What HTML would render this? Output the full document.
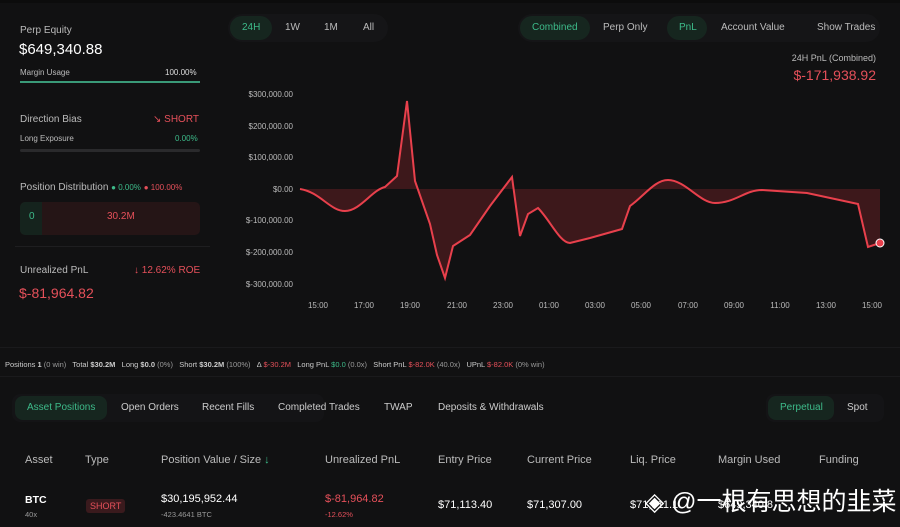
<!DOCTYPE html>
<html><head><meta charset="utf-8"><style>
*{margin:0;padding:0;box-sizing:border-box}
body{width:900px;height:527px;background:#111112;font-family:"Liberation Sans",sans-serif;color:#d8d8d8;position:relative;overflow:hidden}
.a{position:absolute;white-space:nowrap}
.g{color:#3dbb8a}.r{color:#e5505a}.m{color:#9a9a9a}
.pill{position:absolute;border-radius:12px;background:#16261f}
</style></head><body>
<div class="a" style="left:0;top:0;width:900px;height:3px;background:#0c0c0c"></div>
<div class="a" style="left:20px;top:25px;font-size:10px;color:#bbb">Perp Equity</div>
<div class="a" style="left:19px;top:41px;font-size:15px;color:#fff">$649,340.88</div>
<div class="a" style="left:20px;top:68px;font-size:8px;color:#bbb">Margin Usage</div>
<div class="a" style="left:165px;top:68px;font-size:8px;color:#ddd">100.00%</div>
<div class="a" style="left:20px;top:81px;width:180px;height:2px;background:#3a9a78"></div>
<div class="a" style="left:20px;top:114px;font-size:10px;color:#bbb">Direction Bias</div>
<div class="a r" style="left:153px;top:114px;font-size:10px">↘ SHORT</div>
<div class="a" style="left:20px;top:134px;font-size:8px;color:#bbb">Long Exposure</div>
<div class="a g" style="left:175px;top:134px;font-size:8px">0.00%</div>
<div class="a" style="left:20px;top:149px;width:180px;height:3px;background:#2a2a2c;border-radius:2px"></div>
<div class="a" style="left:20px;top:182px;font-size:10px;color:#bbb">Position Distribution <span class="g" style="font-size:8px">● 0.00%</span> <span class="r" style="font-size:8px">● 100.00%</span></div>
<div class="a" style="left:20px;top:202px;width:180px;height:33px;background:#251516;border-radius:5px"></div>
<div class="a" style="left:20px;top:202px;width:22px;height:33px;background:#15231d;border-radius:5px 0 0 5px"></div>
<div class="a g" style="left:29px;top:211px;font-size:10px">0</div>
<div class="a r" style="left:107px;top:211px;font-size:10px">30.2M</div>
<div class="a" style="left:15px;top:246px;width:195px;height:1px;background:#1e1e20"></div>
<div class="a" style="left:20px;top:265px;font-size:10px;color:#bbb">Unrealized PnL</div>
<div class="a r" style="left:134px;top:265px;font-size:10px">↓ 12.62% ROE</div>
<div class="a r" style="left:19px;top:285px;font-size:14px">$-81,964.82</div>
<div class="a" style="left:228px;top:14px;width:160px;height:28px;border-radius:14px;background:#151517"></div>
<div class="pill" style="left:230px;top:16px;width:42px;height:24px"></div>
<div class="a g" style="left:242px;top:22px;font-size:10px">24H</div>
<div class="a" style="left:285px;top:22px;font-size:10px;color:#bbb">1W</div>
<div class="a" style="left:324px;top:22px;font-size:10px;color:#bbb">1M</div>
<div class="a" style="left:363px;top:22px;font-size:10px;color:#bbb">All</div>
<div class="a" style="left:518px;top:14px;width:362px;height:28px;border-radius:14px;background:#151517"></div>
<div class="pill" style="left:520px;top:16px;width:70px;height:24px"></div>
<div class="a g" style="left:532px;top:22px;font-size:10px">Combined</div>
<div class="a" style="left:603px;top:22px;font-size:10px;color:#bbb">Perp Only</div>
<div class="pill" style="left:667px;top:16px;width:40px;height:24px"></div>
<div class="a g" style="left:679px;top:22px;font-size:10px">PnL</div>
<div class="a" style="left:721px;top:22px;font-size:10px;color:#bbb">Account Value</div>
<div class="a" style="left:817px;top:22px;font-size:10px;color:#bbb">Show Trades</div>
<div class="a" style="right:24px;top:53px;font-size:9px;color:#bbb">24H PnL (Combined)</div>
<div class="a r" style="right:24px;top:67px;font-size:14px">$-171,938.92</div>
<svg class="a" style="left:0;top:0" width="900" height="330">
<g font-family="Liberation Sans" font-size="8" fill="#bbb" text-anchor="end">
<text x="293" y="97">$300,000.00</text><text x="293" y="129">$200,000.00</text><text x="293" y="160">$100,000.00</text><text x="293" y="192">$0.00</text><text x="293" y="223">$-100,000.00</text><text x="293" y="255">$-200,000.00</text><text x="293" y="287">$-300,000.00</text>
</g>
<g font-family="Liberation Sans" font-size="8" fill="#bbb" text-anchor="middle">
<text x="318" y="308">15:00</text><text x="364" y="308">17:00</text><text x="410" y="308">19:00</text><text x="457" y="308">21:00</text><text x="503" y="308">23:00</text><text x="549" y="308">01:00</text><text x="595" y="308">03:00</text><text x="641" y="308">05:00</text><text x="688" y="308">07:00</text><text x="734" y="308">09:00</text><text x="780" y="308">11:00</text><text x="826" y="308">13:00</text><text x="872" y="308">15:00</text>
</g>
<path d="M300,189 C320,192 330,211 345,211 C360,211 372,190 385,187 L397,176 L407,101 L415,181 L430,224 L437,255 L445,278 L453,246 L470,235 L490,206 L512,177 L520,236 L528,214 L538,208 C550,220 560,243 570,243 L590,238 L622,229 L630,206 C645,195 655,180 668,180 C685,180 700,203 715,203 C735,203 745,190 762,190 L807,193 L858,204 L868,247 L880,243 L880,189 Z" fill="#6a2024" fill-opacity="0.5"/>
<path d="M300,189 C320,192 330,211 345,211 C360,211 372,190 385,187 L397,176 L407,101 L415,181 L430,224 L437,255 L445,278 L453,246 L470,235 L490,206 L512,177 L520,236 L528,214 L538,208 C550,220 560,243 570,243 L590,238 L622,229 L630,206 C645,195 655,180 668,180 C685,180 700,203 715,203 C735,203 745,190 762,190 L807,193 L858,204 L868,247 L880,243" fill="none" stroke="#e8404c" stroke-width="2"/>
<circle cx="880" cy="243" r="4" fill="#e8404c" stroke="#fff" stroke-width="1"/>
</svg>
<div class="a" style="left:0;top:347px;width:900px;height:1px;background:#1a1a1c"></div>
<div class="a" style="left:5px;top:360px;font-size:7.5px;color:#ccc">Positions <b>1</b> <span class="m">(0 win)</span> &nbsp; Total <b>$30.2M</b> &nbsp; Long <b>$0.0</b> <span class="m">(0%)</span> &nbsp; Short <b>$30.2M</b> <span class="m">(100%)</span> &nbsp; Δ <span class="r">$-30.2M</span> &nbsp; Long PnL <span class="g">$0.0</span> <span class="m">(0.0x)</span> &nbsp; Short PnL <span class="r">$-82.0K</span> <span class="m">(40.0x)</span> &nbsp; UPnL <span class="r">$-82.0K</span> <span class="m">(0% win)</span></div>
<div class="a" style="left:0;top:376px;width:900px;height:1px;background:#1a1a1c"></div>
<div class="a" style="left:12px;top:394px;width:312px;height:28px;border-radius:8px;background:#141416"></div>
<div class="pill" style="left:15px;top:396px;width:92px;height:24px;border-radius:8px"></div>
<div class="a g" style="left:27px;top:402px;font-size:10px">Asset Positions</div>
<div class="a" style="left:121px;top:402px;font-size:10px;color:#ccc">Open Orders</div>
<div class="a" style="left:202px;top:402px;font-size:10px;color:#ccc">Recent Fills</div>
<div class="a" style="left:278px;top:402px;font-size:10px;color:#ccc">Completed Trades</div>
<div class="a" style="left:384px;top:402px;font-size:10px;color:#ccc">TWAP</div>
<div class="a" style="left:438px;top:402px;font-size:10px;color:#ccc">Deposits &amp; Withdrawals</div>
<div class="a" style="left:766px;top:394px;width:118px;height:28px;border-radius:8px;background:#141416"></div>
<div class="pill" style="left:768px;top:396px;width:66px;height:24px;border-radius:8px"></div>
<div class="a g" style="left:780px;top:402px;font-size:10px">Perpetual</div>
<div class="a" style="left:847px;top:402px;font-size:10px;color:#ccc">Spot</div>
<div class="a" style="top:454px;left:0;font-size:11px;color:#bbb;width:900px">
<span class="a" style="left:25px">Asset</span><span class="a" style="left:85px">Type</span><span class="a" style="left:161px">Position Value / Size <span class="g">↓</span></span><span class="a" style="left:325px">Unrealized PnL</span><span class="a" style="left:438px">Entry Price</span><span class="a" style="left:527px">Current Price</span><span class="a" style="left:630px">Liq. Price</span><span class="a" style="left:718px">Margin Used</span><span class="a" style="left:819px">Funding</span></div>
<div class="a" style="left:25px;top:494px;font-size:10.5px;color:#fff;font-weight:bold">BTC</div>
<div class="a" style="left:25px;top:510px;font-size:7.5px;color:#999">40x</div>
<div class="a r" style="left:86px;top:499px;font-size:9px;background:#3a1a1d;padding:2px 4px;border-radius:3px">SHORT</div>
<div class="a" style="left:161px;top:493px;font-size:11px;color:#fff">$30,195,952.44</div>
<div class="a" style="left:161px;top:510px;font-size:7.5px;color:#999">-423.4641 BTC</div>
<div class="a r" style="left:325px;top:493px;font-size:11px">$-81,964.82</div>
<div class="a r" style="left:325px;top:510px;font-size:7.5px">-12.62%</div>
<div class="a" style="left:438px;top:499px;font-size:11px;color:#fff">$71,113.40</div>
<div class="a" style="left:527px;top:499px;font-size:11px;color:#fff">$71,307.00</div>
<div class="a" style="left:630px;top:499px;font-size:11px;color:#fff">$71,911.1</div>
<div class="a" style="left:718px;top:499px;font-size:11px;color:#fff">$649,340.8</div>
<div class="a" style="left:645px;top:482px;font-size:25px;color:#fff;font-family:'Liberation Sans','Noto Sans CJK SC',sans-serif">◈ @一根有思想的韭菜</div>
</body></html>
